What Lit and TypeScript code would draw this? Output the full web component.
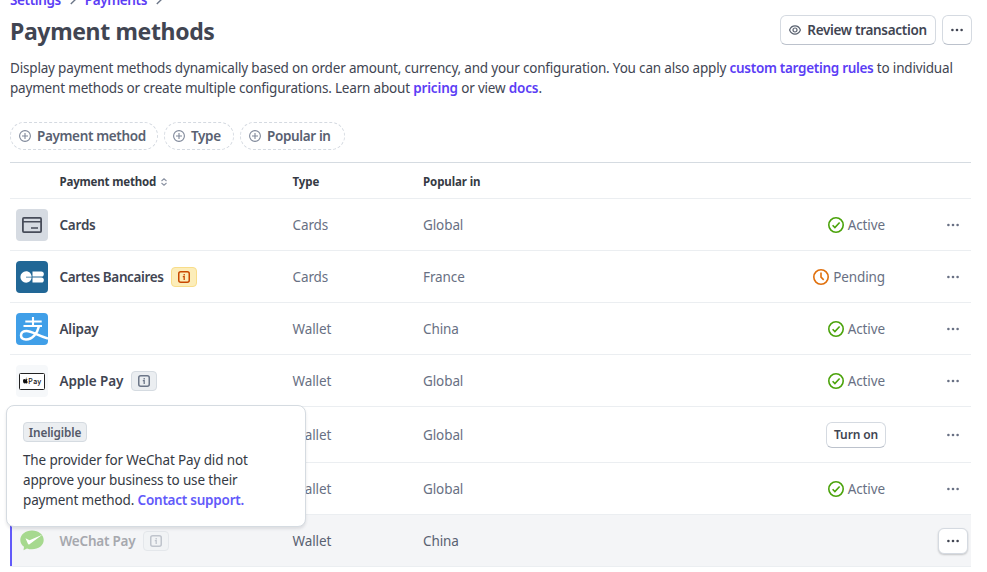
import { LitElement, html, svg, css, nothing } from "lit";
import { customElement } from "lit/decorators.js";
import { classMap } from "lit/directives/class-map.js";

type Status = "active" | "pending" | "turn-on" | "none";
interface Method {
  logo: string;
  name: string;
  track?: number;
  badge?: "warning" | "neutral";
  type: string;
  region: string;
  status: Status;
  kind?: "tall" | "selected";
}

const METHODS: Method[] = [
  { logo: "cards", name: "Cards", type: "Cards", region: "Global", status: "active" },
  { logo: "cb", name: "Cartes Bancaires", track: -0.37, badge: "warning", type: "Cards", region: "France", status: "pending" },
  { logo: "alipay", name: "Alipay", type: "Wallet", region: "China", status: "active" },
  { logo: "apple", name: "Apple Pay", track: -0.12, badge: "neutral", type: "Wallet", region: "Global", status: "active" },
  { logo: "", name: "", type: "Wallet", region: "Global", status: "turn-on", kind: "tall" },
  { logo: "", name: "", type: "Wallet", region: "Global", status: "active" },
  { logo: "wechat", name: "WeChat Pay", badge: "neutral", type: "Wallet", region: "China", status: "none", kind: "selected" },
];

const CHIPS: [string, number][] = [["Payment method", 148], ["Type", 70], ["Popular in", 105]];

const dots = html`<svg width="12" height="4" viewBox="0 0 12 4" fill="currentColor">
  <circle cx="1.4" cy="2" r="1.3" /><circle cx="6" cy="2" r="1.3" /><circle cx="10.6" cy="2" r="1.3" />
</svg>`;

const chevron = html`<svg class="chevron" width="6" height="10" viewBox="0 0 6 10" fill="none" stroke="#6c7688" stroke-width="1.4">
  <path d="M.8 1 4.9 5 .8 9" />
</svg>`;

const sort = html`<svg class="sort" width="6" height="8" viewBox="0 0 6 8" fill="none" stroke="#8b93a3" stroke-width="1.1">
  <path d="M.5 3 3 .8 5.500 3M.5 5 3 7.200 5.500 5" />
</svg>`;

const plus = html`<svg width="12" height="12" viewBox="0 0 12 12" fill="none" stroke="currentColor" stroke-width="1.1">
  <circle cx="6" cy="6" r="5.4" /><path d="M6 3v6M3 6h6" />
</svg>`;

const eye = html`<svg width="12" height="10" viewBox="0 0 12 10" fill="none" stroke="#59616f" stroke-width="1.2">
  <path d="M.6 5C1.600 2.400 3.600.9 6 .9S10.400 2.400 11.400 5C10.400 7.600 8.400 9.100 6 9.100S1.600 7.600.6 5Z" /><circle cx="6" cy="5" r="2" />
</svg>`;

const info = html`<svg width="12" height="12" viewBox="0 0 12 12" fill="none" stroke="currentColor" stroke-width="1.5">
  <rect x=".75" y=".75" width="10.5" height="10.5" rx="2" />
  <path d="M6.200 3v1.400M4.800 5.700H6.200V9" stroke-width="1.300" />
</svg>`;

const check = html`<svg width="16" height="16" viewBox="0 0 16 16" fill="none" stroke="#4ba30b" stroke-width="1.6">
  <circle cx="8" cy="8" r="7.200" /><path d="m4.600 8.200 2.300 2.300 4.700-5" />
</svg>`;

const clock = html`<svg width="16" height="16" viewBox="0 0 16 16" fill="none" stroke="#e0700d" stroke-width="1.6">
  <circle cx="8" cy="8" r="7.200" /><path d="M8 3.500v4.700l2.700 2.600" />
</svg>`;

const LOGOS: Record<string, unknown> = {
  cards: svg`<rect width="32" height="32" rx="4" fill="#d6dbe2"/>
    <rect x="6.900" y="8.900" width="18.200" height="14.200" rx="1" fill="none" stroke="#474c59" stroke-width="1.800"/>
    <path d="M7 12.700h18M15 18.900h7" stroke="#474c59" stroke-width="1.500"/>`,
  cb: svg`<rect width="32" height="32" rx="4" fill="#216796"/>
    <path d="M15.600 15.700H10V16.500H15.600C15.400 19.500 13 21.700 10.100 21.700A5.700 5.700 0 0 1 10.100 10.300C13 10.300 15.400 12.500 15.600 15.700Z" fill="#fff"/>
    <path d="M16.500 10.500H25.300A2.550 2.550 0 0 1 25.300 15.600H16.500ZM16.500 16.500H25.300A2.550 2.550 0 0 1 25.300 21.600H16.500Z" fill="#fff"/>`,
  alipay: svg`<rect width="32" height="32" rx="4" fill="#409fe8"/>
    <path d="M9.300 8.500H25.700M7.500 13H26M17 4V13" fill="none" stroke="#fff" stroke-width="2.100"/>
    <path d="M23 13C21.500 20 16.500 26.500 10 26.500C6.500 26.500 5 24.500 5 22.300C5 19.500 7.500 18 10.500 18C16 18 21 22.500 32 25.500" fill="none" stroke="#fff" stroke-width="2.500"/>`,
  apple: svg`<rect width="32" height="32" rx="4" fill="#f6f8fa"/>
    <rect x="3.500" y="8.500" width="25" height="16" rx="1" fill="#fff" stroke="#222" stroke-width="1"/>
    <path d="M9.700 13.900c.1-.8.500-1.200 1-1.400.1.800-.4 1.300-1 1.400ZM9.400 14.400c.5 0 .7-.3 1.200-.3.400 0 .8.200 1 .5-.9.600-.8 1.900.2 2.300-.3.900-.8 1.500-1.300 1.500-.4 0-.6-.2-1-.2s-.6.200-1 .2c-.8 0-1.500-1.500-1.500-2.500 0-1.200.7-1.800 1.400-1.800.4 0 .7.300 1 .3Z" fill="#111"/>
    <text x="12.300" y="18.800" font-family="Inter, sans-serif" font-size="7" font-weight="500" fill="#111" textLength="13">Pay</text>`,
  wechat: svg`<path d="M16 5.500C22.500 5.500 27.700 9.600 27.700 15S22.500 24.300 16 24.300C14.200 24.300 12.500 24 11 23.400L7.500 25.300 8 21.800C5.700 20.100 4.300 17.700 4.300 15 4.300 9.600 9.500 5.500 16 5.500Z" fill="#a6d98f"/>
    <path d="M9.500 13.300 13.500 15.200 26.300 9.800 13.500 19.200C12.800 19.600 12.200 19.400 11.900 18.700Z" fill="#fff"/>`,
};

@customElement("app-root")
export class AppRoot extends LitElement {
  static styles = css`
    :host {
      display: block;
      position: relative;
      box-sizing: border-box;
      width: 987px;
      height: 572px;
      overflow: hidden;
      padding: 0 16px 0 10px;
      background: #fff;
      color: #414552;
      font: 400 13.5px/20px "Noto Sans", "Open Sans", sans-serif;
      letter-spacing: -0.1px;
    }
    * { box-sizing: border-box; }
    svg { display: block; flex: none; }
    a { color: #5b3df5; font-weight: 600; letter-spacing: -0.3px; text-decoration: none; }
    .crumbs { display: flex; align-items: center; height: 20px; margin-top: -10px; }
    .crumbs a { letter-spacing: -0.38px; }
    .crumbs .chevron { margin: 0 9px; }
    .head { display: flex; justify-content: space-between; margin-top: 5px; height: 30px; }
    h1 { margin: 0; font-size: 23px; font-weight: 700; line-height: 33px; letter-spacing: -0.35px; color: #414552; }
    .actions { display: flex; gap: 6px; margin-right: -1px; }
    .btn {
      display: flex; align-items: center; justify-content: center; gap: 6px;
      height: 30px; border: 1px solid #d5dae1; border-bottom-color: #bcc2cc; border-radius: 6px;
      background: #fff; color: #414552; font-weight: 600; white-space: nowrap;
    }
    .review { width: 156px; letter-spacing: -0.31px; }
    .square { width: 30px; }
    .intro { margin: 13px 0 0; height: 40px; letter-spacing: -0.18px; white-space: nowrap; }
    .intro span { letter-spacing: -0.19px; }
    .intro span a { letter-spacing: -0.15px; }
    .chips { display: flex; gap: 6px; margin-top: 24px; }
    .chip {
      display: flex; align-items: center; gap: 6px; height: 28px; padding-left: 8px;
      border: 1px dashed #d5dae1; border-radius: 14px; color: #596171; font-weight: 600; letter-spacing: -0.36px; white-space: nowrap;
    }
    .chip svg { color: #7f889a; }
    .table { margin-top: 12px; border-top: 1px solid #d5dbe1; width: 961px; }
    .row {
      display: grid; grid-template-columns: 49.5px 233px 130.5px 1fr 120px 86px; align-items: center;
      height: 52px; border-bottom: 1px solid #ebeef1; color: #687083; white-space: nowrap;
    }
    .row.header { height: 36px; padding-top: 2px; color: #353a44; font-size: 11.5px; font-weight: 700; letter-spacing: -0.1px; }
    .header .name { color: inherit; font-weight: 700; letter-spacing: -0.18px; }
    .sort { margin-left: 5px; }
    .tall { height: 56px; }
    .selected { background: #f4f5f7; box-shadow: inset 2px 0 #625afa; }
    .logo { padding-left: 6px; }
    .name { display: flex; align-items: center; color: #414552; font-weight: 600; letter-spacing: -0.22px; }
    .selected .name { color: #a6a8ae; }
    .selected .type, .selected .region { color: #596171; }
    .badge {
      display: flex; align-items: center; justify-content: center; width: 26px; height: 20px; margin-left: 7.5px;
      border: 1px solid #d5dbe1; border-radius: 4px; background: #ebeef1; color: #6c7688;
    }
    .badge.warning { border-color: #f8dd8a; background: #fcedb9; color: #c84801; }
    .selected .badge { background: #f1f3f5; border-color: #e4e7eb; color: #bfc4cc; }
    .status { display: flex; align-items: center; justify-content: flex-end; gap: 4px; }
    .turn { height: 26px; width: 60px; margin-right: -1px; font-size: 12px; letter-spacing: -0.15px; }
    .more { display: flex; justify-content: center; padding-left: 50px; color: #687083; }
    .selected .square { height: 26px; border-color: #d5dae1; box-shadow: 0 1px 2px #0003; }
    .pop {
      position: absolute; left: 6px; top: 405px; width: 300px; height: 122px; padding: 16px;
      border: 1px solid #d5dbe1; border-radius: 8px; background: #fff; color: #353a44;
      box-shadow: 0 2px 3px #3031401f; white-space: nowrap;
    }
    .tag {
      display: flex; align-items: center; justify-content: center; width: 64px; height: 20px; margin-bottom: 8px;
      border: 1px solid #d5dbe1; border-radius: 4px; background: #ebeef1; color: #545969;
      font-size: 11.8px; font-weight: 600; letter-spacing: -0.14px;
    }
    .pop a { color: #625afa; letter-spacing: -0.24px; }
    .pop { letter-spacing: -0.14px; }
  `;

  private row(m: Method) {
    const selected = m.kind === "selected";
    return html`<div class=${classMap({ row: true, tall: m.kind === "tall", selected })}>
      <div class="logo">${m.logo ? html`<svg width="32" height="32" viewBox="0 0 32 32">${LOGOS[m.logo]}</svg>` : nothing}</div>
      <div class="name"><span style="letter-spacing:${m.track ?? -0.24}px">${m.name}</span>${m.badge ? html`<span class="badge ${m.badge}">${info}</span>` : nothing}</div>
      <div class="type">${m.type}</div>
      <div class="region">${m.region}</div>
      <div class="status">
        ${m.status === "active" ? html`${check}<span>Active</span>` : nothing}
        ${m.status === "pending" ? html`${clock}<span>Pending</span>` : nothing}
        ${m.status === "turn-on" ? html`<span class="btn turn">Turn on</span>` : nothing}
      </div>
      <div class="more">${selected ? html`<span class="btn square">${dots}</span>` : dots}</div>
    </div>`;
  }

  render() {
    return html`
      <nav class="crumbs"><a>Settings</a>${chevron}<a>Payments</a>${chevron}</nav>
      <header class="head">
        <h1>Payment methods</h1>
        <div class="actions"><div class="btn review">${eye}Review transaction</div><div class="btn square">${dots}</div></div>
      </header>
      <p class="intro">Display payment methods dynamically based on order amount, currency, and your configuration. You can also apply <a>custom targeting rules</a> to individual<br /><span>payment methods or create multiple configurations. Learn about <a>pricing</a> or view <a>docs</a>.</span></p>
      <div class="chips">
        ${CHIPS.map(([t, w]) => html`<div class="chip" style="width:${w}px">${plus}${t}</div>`)}
      </div>
      <div class="table">
        <div class="row header"><div></div><div class="name">Payment method${sort}</div><div>Type</div><div>Popular in</div></div>
        ${METHODS.map((m) => this.row(m))}
      </div>
      <div class="pop"><div class="tag">Ineligible</div>The provider for WeChat Pay did not<br />approve your business to use their<br />payment method. <a>Contact support.</a></div>
    `;
  }
}
